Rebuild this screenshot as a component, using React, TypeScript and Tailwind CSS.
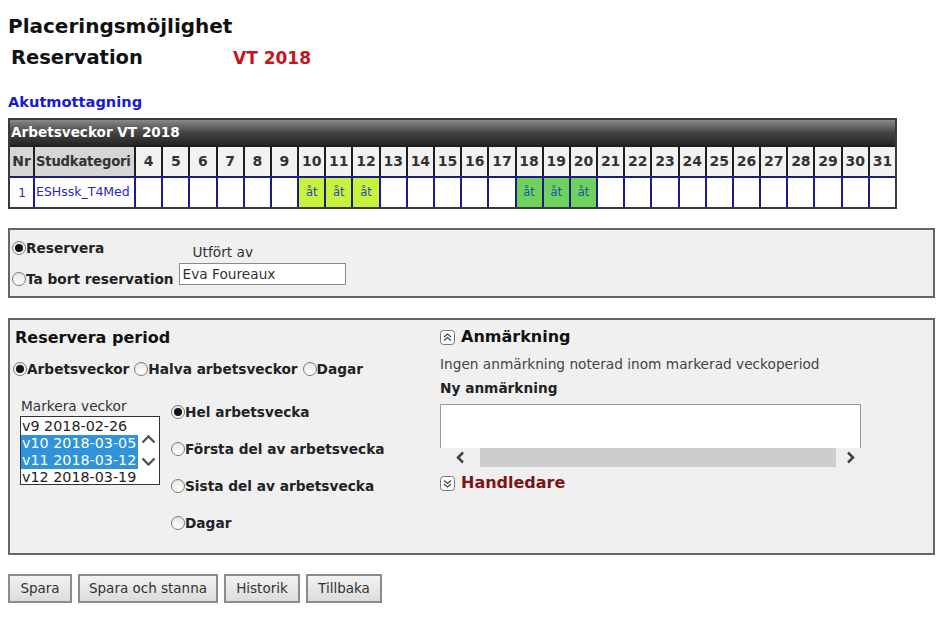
import React from "react";

function Radio({ checked = false }: { checked?: boolean }) {
  return (
    <span className="inline-flex w-[14px] h-[14px] rounded-full border border-[#7a7a7a] bg-gradient-to-b from-[#e6e6e6] to-white items-center justify-center shrink-0">
      {checked && <span className="w-[8px] h-[8px] rounded-full bg-[#111]" />}
    </span>
  );
}

function CollapseIcon({ down = false }: { down?: boolean }) {
  return (
    <svg width="15" height="15" viewBox="0 0 15 15" className="shrink-0">
      <rect x="0.5" y="0.5" width="14" height="14" rx="3" fill="#fff" stroke="#777" />
      {down ? (
        <g fill="none" stroke="#444" strokeWidth="1.3">
          <path d="M4 4.5 L7.5 7.5 L11 4.5" />
          <path d="M4 8 L7.5 11 L11 8" />
        </g>
      ) : (
        <g fill="none" stroke="#444" strokeWidth="1.3">
          <path d="M4 7 L7.5 4 L11 7" />
          <path d="M4 10.5 L7.5 7.5 L11 10.5" />
        </g>
      )}
    </svg>
  );
}

const weeks = Array.from({ length: 28 }, (_, i) => i + 4);
const yellow = [10, 11, 12];
const green = [18, 19, 20];

export default function App() {
  return (
    <div className="w-[945px] h-[618px] bg-white font-['DejaVu_Sans',Verdana,sans-serif] text-[#222] overflow-hidden">
      <div className="px-[8px] pt-[14px]">
        <div className="text-[20px] leading-[24px] font-bold text-[#111]">Placeringsmöjlighet</div>
        <div className="flex items-baseline mt-[8px] pl-[3px]">
          <span className="text-[19.5px] leading-[24px] font-bold text-[#111] w-[222px]">Reservation</span>
          <span className="text-[17px] leading-[24px] font-bold text-[#c4151c]">VT 2018</span>
        </div>
        <div className="mt-[23px] text-[14.6px] leading-[18px] font-bold text-[#1a1ad0]">Akutmottagning</div>

        {/* Table */}
        <div className="mt-[7px] w-[889px] border-2 border-[#3a3a3a] bg-[#2a2a2a]">
          <div className="h-[25px] bg-gradient-to-b from-[#8a8a8a] via-[#454545] to-[#262626] text-white font-bold text-[13.6px] leading-[25px] px-[1px]">
            Arbetsveckor VT 2018
          </div>
          <div className="grid grid-cols-[23px_99px_repeat(28,minmax(0,1fr))] gap-[2px] bg-[#1e1e1e] pt-[2px]">
            <div className="h-[29px] bg-[#d6d6d6] text-[14px] font-bold text-[#333] flex items-center justify-center">Nr</div>
            <div className="h-[29px] bg-[#d6d6d6] text-[13.2px] font-bold text-[#333] flex items-center pl-[1px] whitespace-nowrap overflow-hidden tracking-[-0.2px]">Studkategori</div>
            {weeks.map((w) => (
              <div key={w} className="h-[29px] bg-[#f2f2f2] text-[14px] font-bold text-[#333] flex items-center justify-center">
                {w}
              </div>
            ))}
          </div>
          <div className="grid grid-cols-[23px_99px_repeat(28,minmax(0,1fr))] gap-[2px] bg-[#1c1c86] pt-[2px]">
            <div className="h-[29px] bg-white text-[12px] text-[#2626c4] flex items-center justify-end pr-[7px]">1</div>
            <div className="h-[29px] bg-white text-[12.5px] text-[#2626c4] flex items-center pl-[1px] whitespace-nowrap">ESHssk_T4Med</div>
            {weeks.map((w) => {
              const y = yellow.includes(w);
              const g = green.includes(w);
              return (
                <div
                  key={w}
                  className={
                    "h-[29px] flex items-center justify-center text-[11.5px] text-[#1f4fb0] " +
                    (y ? "bg-[#c8f23c]" : g ? "bg-[#6fd25c]" : "bg-white")
                  }
                >
                  {y || g ? "åt" : ""}
                </div>
              );
            })}
          </div>
        </div>

        {/* Panel 1 */}
        <div className="mt-[19px] w-[927px] h-[70px] border-2 border-[#666] bg-[#f0f0f0] flex pl-[2px]">
          <div className="flex flex-col pt-[8px] gap-[11px]">
            <div className="flex items-center h-[20px] text-[13.7px] font-bold text-[#222]">
              <Radio checked />
              <span>Reservera</span>
            </div>
            <div className="flex items-center h-[20px] text-[13.7px] font-bold text-[#222]">
              <Radio />
              <span>Ta bort reservation</span>
            </div>
          </div>
          <div className="flex flex-col pt-[14px] ml-[5px]">
            <div className="h-[16px] leading-[16px] text-[13.7px] text-[#333] pl-[14px]">Utfört av</div>
            <div className="mt-[3px] w-[167px] h-[22px] border border-[#8a8a8a] bg-white text-[13.7px] leading-[20px] text-[#333] px-[3px]">
              Eva Foureaux
            </div>
          </div>
        </div>

        {/* Panel 2 */}
        <div className="mt-[20px] w-[927px] h-[237px] border-2 border-[#666] bg-[#f0f0f0] flex">
          <div className="w-[430px] flex flex-col">
            <div className="pt-[8px] pl-[5px] text-[16px] leading-[20px] font-bold text-[#111]">Reservera period</div>
            <div className="mt-[11px] pl-[3px] flex items-center h-[20px] text-[13.7px] font-bold text-[#222]">
              <Radio checked />
              <span>Arbetsveckor</span>
              <span className="w-[5px]" />
              <Radio />
              <span>Halva arbetsveckor</span>
              <span className="w-[5px]" />
              <Radio />
              <span>Dagar</span>
            </div>
            <div className="mt-[19px] flex">
              <div className="pl-[10px] flex flex-col">
                <div className="h-[16px] leading-[16px] text-[13.7px] text-[#333] pl-[1px]">Markera veckor</div>
                <div className="mt-[2px] w-[140px] h-[69px] border border-[#333] bg-white flex">
                  <div className="flex flex-col pt-[1px] w-[117px]">
                    <div className="h-[17px] leading-[17px] text-[14.3px] text-[#222] pl-[1px] whitespace-nowrap">v9 2018-02-26</div>
                    <div className="h-[17px] leading-[17px] text-[14.3px] text-white bg-[#2e93d8] pl-[1px] whitespace-nowrap">v10 2018-03-05</div>
                    <div className="h-[17px] leading-[17px] text-[14.3px] text-white bg-[#2e93d8] pl-[1px] whitespace-nowrap">v11 2018-03-12</div>
                    <div className="h-[17px] leading-[17px] text-[14.3px] text-[#222] pl-[1px] whitespace-nowrap">v12 2018-03-19</div>
                  </div>
                  <div className="flex flex-col items-center justify-center gap-[13px] flex-1">
                    <svg width="15" height="10" viewBox="0 0 15 10">
                      <path d="M1.5 8.5 L7.5 2.5 L13.5 8.5" fill="none" stroke="#555" strokeWidth="2.4" />
                    </svg>
                    <svg width="15" height="10" viewBox="0 0 15 10">
                      <path d="M1.5 1.5 L7.5 7.5 L13.5 1.5" fill="none" stroke="#555" strokeWidth="2.4" />
                    </svg>
                  </div>
                </div>
              </div>
              <div className="ml-[11px] pt-[4px] flex flex-col gap-[17px]">
                {[
                  ["Hel arbetsvecka", true],
                  ["Första del av arbetsvecka", false],
                  ["Sista del av arbetsvecka", false],
                  ["Dagar", false],
                ].map(([label, c]) => (
                  <div key={label as string} className="flex items-center h-[20px] text-[13.7px] font-bold text-[#222]">
                    <Radio checked={c as boolean} />
                    <span>{label as string}</span>
                  </div>
                ))}
              </div>
            </div>
          </div>
          <div className="flex flex-col">
            <div className="pt-[7px] flex items-center h-[27px] gap-[6px]">
              <CollapseIcon />
              <span className="text-[16px] leading-[20px] font-bold text-[#111]">Anmärkning</span>
            </div>
            <div className="mt-[8px] h-[18px] leading-[18px] text-[13.7px] text-[#444] whitespace-nowrap">
              Ingen anmärkning noterad inom markerad veckoperiod
            </div>
            <div className="mt-[6px] h-[18px] leading-[18px] text-[13.7px] font-bold text-[#222]">Ny anmärkning</div>
            <div className="mt-[7px] w-[421px] h-[63px] flex flex-col">
              <div className="h-[44px] border border-b-0 border-[#999] bg-white" />
              <div className="h-[19px] bg-[#efefef] flex items-center">
                <div className="w-[40px] flex items-center justify-center">
                  <svg width="11" height="13" viewBox="0 0 11 13">
                    <path d="M8 1.5 L3 6.5 L8 11.5" fill="none" stroke="#444" strokeWidth="2.5" />
                  </svg>
                </div>
                <div className="flex-1 h-[19px] bg-[#cdcdcd]" />
                <div className="w-[25px] flex items-center justify-center pl-[4px]">
                  <svg width="11" height="13" viewBox="0 0 11 13">
                    <path d="M3 1.5 L8 6.5 L3 11.5" fill="none" stroke="#444" strokeWidth="2.5" />
                  </svg>
                </div>
              </div>
            </div>
            <div className="mt-[6px] flex items-center h-[20px] gap-[6px]">
              <CollapseIcon down />
              <span className="text-[16px] leading-[20px] font-bold text-[#7d1414]">Handledare</span>
            </div>
          </div>
        </div>

        {/* Buttons */}
        <div className="mt-[19px] flex gap-[6px]">
          {[
            ["Spara", "w-[64px]"],
            ["Spara och stanna", "w-[140px]"],
            ["Historik", "w-[76px]"],
            ["Tillbaka", "w-[76px]"],
          ].map(([t, w]) => (
            <div
              key={t}
              className={
                w +
                " h-[29px] border-2 border-[#8c8c8c] bg-gradient-to-b from-[#f2f2f2] to-[#dcdcdc] text-[13.5px] text-[#333] flex items-center justify-center"
              }
            >
              {t}
            </div>
          ))}
        </div>
      </div>
    </div>
  );
}
